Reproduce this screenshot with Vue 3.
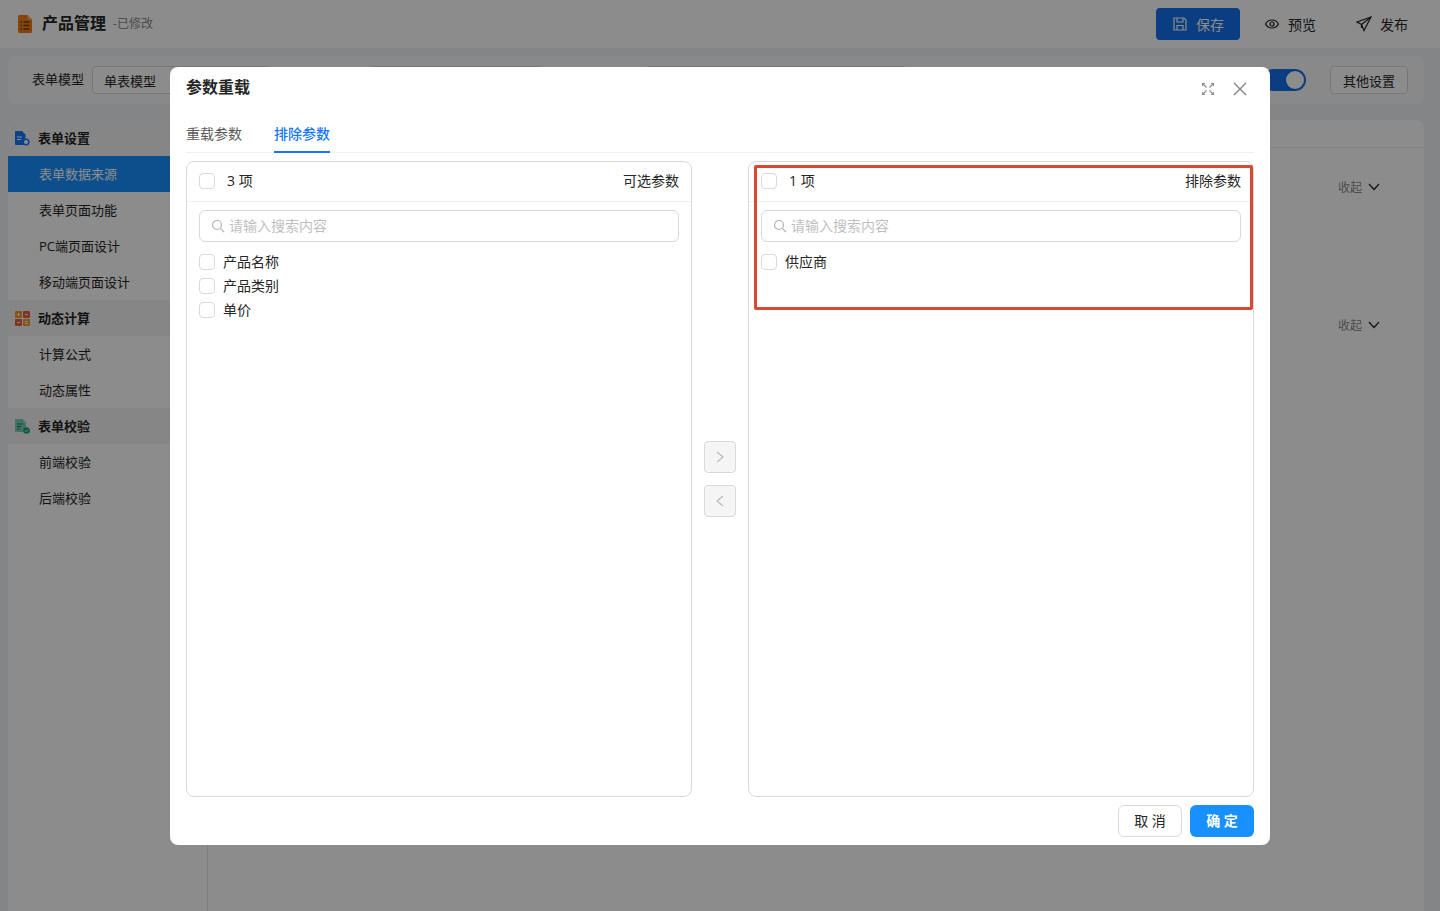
<template>
  <div class="page">
    <header class="topbar">
      <div class="brand">
        <svg class="brand-icon" width="16" height="18" viewBox="0 0 16 18">
          <path d="M1 1.5C1 .7 1.6 0 2.4 0H10.5L15 4.5V16.5c0 .8-.6 1.5-1.4 1.5H2.4C1.6 18 1 17.3 1 16.500Z" fill="#f07f13" />
          <path d="M10.500 0V4.500H15Z" fill="#f9b572" />
          <path d="M3.500 7h1.500M6.500 7h6M3.500 10.500h1.500M6.500 10.500h6M3.500 14h1.500M6.500 14h6" stroke="#7a3f05" stroke-width="1.300" />
        </svg>
        <span class="brand-name">产品管理</span>
        <span class="brand-state">-已修改</span>
      </div>
      <div class="actions">
        <button class="save-btn">
          <svg width="16" height="16" viewBox="0 0 16 16" fill="none" stroke="#fff" stroke-width="1.200">
            <path d="M2 2h10l2 2v10H2Z" />
            <path d="M5 2v4h6V2M5 14V9.500h6V14" />
          </svg>
          <span>保存</span>
        </button>
        <button class="plain-btn">
          <svg width="16" height="16" viewBox="0 0 16 16" fill="none" stroke="#222" stroke-width="1.200">
            <path d="M1.500 8C3 5.300 5.300 4 8 4s5 1.300 6.500 4C13 10.700 10.700 12 8 12S3 10.700 1.500 8Z" />
            <circle cx="8" cy="8" r="2" />
          </svg>
          <span>预览</span>
        </button>
        <button class="plain-btn">
          <svg width="16" height="16" viewBox="0 0 16 16" fill="none" stroke="#222" stroke-width="1.200">
            <path d="M15 1 1 6l4.500 2.500L8 14.500Z" />
            <path d="M15 1 5.500 8.500V12" />
          </svg>
          <span>发布</span>
        </button>
      </div>
    </header>

    <section class="toolbar">
      <label class="tool-label">表单模型</label>
      <div class="select select-model">单表模型</div>
      <label class="tool-label tool-gap">绑定模型</label>
      <div class="select select-bind"></div>
      <label class="tool-label tool-gap">数据接口</label>
      <div class="select select-api"></div>
      <div class="switch"><i></i></div>
      <button class="other-btn">其他设置</button>
    </section>

    <main class="workspace">
      <aside class="sidebar">
        <template v-for="group in menu" :key="group.title">
          <div class="group-title">
            <svg v-if="group.icon === 'form'" width="15" height="15" viewBox="0 0 15 15">
              <path d="M0 1C0 .4.400 0 1 0h6l3.500 3.500V14H1c-.6 0-1-.4-1-1Z" fill="#1677ff" />
              <path d="M2 6h5M2 8.500h4" stroke="#fff" stroke-width="1" />
              <circle cx="11" cy="11" r="2.800" fill="#fff" stroke="#1677ff" stroke-width="1.600" />
            </svg>
            <svg v-else-if="group.icon === 'calc'" width="15" height="15" viewBox="0 0 15 15">
              <rect x="0" y="0" width="7" height="7" rx="1" fill="#f59a23" />
              <rect x="8" y="0" width="7" height="7" rx="1" fill="#e8613c" />
              <rect x="0" y="8" width="7" height="7" rx="1" fill="#e8613c" />
              <rect x="8" y="8" width="7" height="7" rx="1" fill="#f59a23" />
              <path d="M2 3.500h3M3.500 2v3M10 3.500h3M2 11.500h3M10 10.500h3M10 12.500h3" stroke="#fff" stroke-width=".9" />
            </svg>
            <svg v-else width="15" height="15" viewBox="0 0 15 15">
              <path d="M0 0h7.500L11 3.500V13H0Z" fill="#7fd0b8" />
              <path d="M2 5h6M2 7.500h4M2 10h3" stroke="#0f7a5c" stroke-width="1" />
              <circle cx="11.500" cy="11.500" r="3.300" fill="#12a47a" />
              <path d="M10 11.500l1.100 1.100L13 10.700" fill="none" stroke="#fff" stroke-width="1" />
            </svg>
            <span>{{ group.title }}</span>
          </div>
          <div
            v-for="item in group.items"
            :key="item"
            class="menu-item"
            :class="{ active: item === '表单数据来源' }"
          >
            {{ item }}
          </div>
        </template>
      </aside>
      <div class="content">
        <div class="content-tabs"></div>
        <div class="fold-row first"><span>收起</span><svg width="12" height="8" viewBox="0 0 12 8" fill="none" stroke="#222" stroke-width="1.200"><path d="M1 1l5 5.500L11 1" /></svg></div>
        <div class="fold-row"><span>收起</span><svg width="12" height="8" viewBox="0 0 12 8" fill="none" stroke="#222" stroke-width="1.200"><path d="M1 1l5 5.500L11 1" /></svg></div>
      </div>
    </main>

    <div class="mask">
      <div class="modal">
        <div class="modal-head">
          <h3>参数重载</h3>
          <div class="modal-tools">
            <svg width="14" height="14" viewBox="0 0 14 14" fill="none" stroke="#8c8c8c" stroke-width="1.100">
              <path d="M2.500 2.500l3 3M11.500 2.500l-3 3M2.500 11.500l3-3M11.500 11.500l-3-3" />
              <path d="M1 1h3.500L1 4.500ZM13 1H9.500L13 4.500ZM1 13h3.500L1 9.500ZM13 13H9.500L13 9.500Z" fill="#8c8c8c" stroke="none" />
            </svg>
            <svg width="14" height="14" viewBox="0 0 14 14" fill="none" stroke="#808080" stroke-width="1.300">
              <path d="M1 1l12 12M13 1 1 13" />
            </svg>
          </div>
        </div>

        <div class="tabs">
          <div class="tab">重载参数</div>
          <div class="tab current">排除参数</div>
        </div>

        <div class="transfer">
          <div class="panel">
            <div class="panel-head">
              <span class="check"></span>
              <span class="count">3 项</span>
              <span class="panel-title">可选参数</span>
            </div>
            <div class="panel-body">
              <div class="search">
                <svg width="14" height="14" viewBox="0 0 14 14" fill="none" stroke="#b3b3b3" stroke-width="1.200">
                  <circle cx="6" cy="6" r="4.500" />
                  <path d="M9.300 9.300 13 13" />
                </svg>
                <span>请输入搜索内容</span>
              </div>
              <div v-for="name in available" :key="name" class="row">
                <span class="check"></span>
                <span class="row-text">{{ name }}</span>
              </div>
            </div>
          </div>

          <div class="shift">
            <button>
              <svg width="8" height="12" viewBox="0 0 8 12" fill="none" stroke="#b8b8b8" stroke-width="1.100"><path d="M1 1l6 5-6 5" /></svg>
            </button>
            <button>
              <svg width="8" height="12" viewBox="0 0 8 12" fill="none" stroke="#b8b8b8" stroke-width="1.100"><path d="M7 1 1 6l6 5" /></svg>
            </button>
          </div>

          <div class="panel">
            <div class="panel-head">
              <span class="check"></span>
              <span class="count">1 项</span>
              <span class="panel-title">排除参数</span>
            </div>
            <div class="panel-body">
              <div class="search">
                <svg width="14" height="14" viewBox="0 0 14 14" fill="none" stroke="#b3b3b3" stroke-width="1.200">
                  <circle cx="6" cy="6" r="4.500" />
                  <path d="M9.300 9.300 13 13" />
                </svg>
                <span>请输入搜索内容</span>
              </div>
              <div v-for="name in excluded" :key="name" class="row">
                <span class="check"></span>
                <span class="row-text">{{ name }}</span>
              </div>
            </div>
            <div class="callout"></div>
          </div>
        </div>

        <div class="modal-foot">
          <button class="cancel">取 消</button>
          <button class="confirm">确 定</button>
        </div>
      </div>
    </div>
  </div>
</template>

<script setup>
const menu = [
  { title: '表单设置', icon: 'form', items: ['表单数据来源', '表单页面功能', 'PC端页面设计', '移动端页面设计'] },
  { title: '动态计算', icon: 'calc', items: ['计算公式', '动态属性'] },
  { title: '表单校验', icon: 'check', items: ['前端校验', '后端校验'] }
]

const available = ['产品名称', '产品类别', '单价']
const excluded = ['供应商']
</script>

<style>
html,
body {
  margin: 0;
  overflow: hidden;
}
</style>

<style scoped>
.page {
  position: relative;
  height: 911px;
  display: flex;
  flex-direction: column;
  background: #eff1f4;
  color: #262626;
  font-family: "Open Sans", "Noto Sans CJK SC", sans-serif;
  font-size: 14px;
  overflow: hidden;
}

button {
  font-family: inherit;
  cursor: pointer;
}

.topbar {
  height: 48px;
  flex: none;
  display: flex;
  align-items: center;
  justify-content: space-between;
  padding: 0 20px 0 17px;
  background: #fff;
}

.brand {
  display: flex;
  align-items: center;
}

.brand-name {
  margin-left: 9px;
  margin-top: -4px;
  font-size: 16px;
  font-weight: 600;
}

.brand-state {
  margin-left: 7px;
  margin-top: -2px;
  font-size: 12px;
  color: #8c8c8c;
}

.actions {
  display: flex;
  align-items: center;
}

.save-btn,
.plain-btn {
  height: 32px;
  display: flex;
  align-items: center;
  gap: 8px;
  border: 0;
  font-size: 14px;
}

.save-btn {
  width: 84px;
  justify-content: center;
  margin-right: 12px;
  border-radius: 4px;
  background: #1570ef;
  color: #fff;
}

.plain-btn {
  width: 76px;
  padding: 0;
  justify-content: center;
  margin-right: 16px;
  background: none;
  color: #262626;
}

.plain-btn:last-child {
  margin-right: 0;
}

.toolbar {
  height: 48px;
  flex: none;
  margin: 8px 16px 16px 8px;
  padding: 0 16px 0 24px;
  display: flex;
  align-items: center;
  border-radius: 8px;
  background: #fafafa;
  font-size: 13px;
}

.tool-label {
  margin-top: -4px;
}

.tool-gap {
  margin-left: 16px;
}

.select {
  height: 28px;
  box-sizing: border-box;
  margin-left: 8px;
  padding: 1px 0 0 11px;
  line-height: 26px;
  border: 1px solid #d9d9d9;
  border-radius: 4px;
  background: #fff;
}

.select-model {
  width: 178px;
}

.select-bind {
  width: 174px;
  margin-left: 31px;
}

.select-api {
  width: 262px;
  margin-left: 34px;
}

.switch {
  width: 44px;
  height: 22px;
  margin-left: auto;
  box-sizing: border-box;
  padding: 2px;
  display: flex;
  justify-content: flex-end;
  border-radius: 11px;
  background: #1570ef;
}

.switch i {
  width: 18px;
  height: 18px;
  border-radius: 50%;
  background: #fff;
}

.other-btn {
  width: 78px;
  height: 28px;
  margin-left: 24px;
  padding: 0;
  border: 1px solid #d9d9d9;
  border-radius: 4px;
  background: #fff;
  color: #262626;
  font-size: 13px;
}

.workspace {
  flex: 1;
  display: flex;
  margin: 0 16px 0 8px;
  border-radius: 8px 8px 0 0;
  background: #fff;
  overflow: hidden;
}

.sidebar {
  width: 200px;
  flex: none;
  box-sizing: border-box;
  border-right: 1px solid #e4e4e4;
  font-size: 13px;
}

.group-title {
  height: 36px;
  display: flex;
  align-items: center;
  gap: 8px;
  padding-left: 7px;
  background: #f5f5f5;
  font-weight: 600;
}

.group-title span {
  margin-top: -2px;
}

.menu-item {
  height: 36px;
  padding-left: 31px;
  line-height: 36px;
}

.menu-item.active {
  background: #1890ff;
  color: #fff;
}

.content {
  flex: 1;
}

.content-tabs {
  height: 27px;
  border-bottom: 1px solid #ededed;
}

.fold-row {
  height: 20px;
  display: flex;
  align-items: center;
  justify-content: flex-end;
  gap: 6px;
  margin-top: 118px;
  padding-right: 44px;
  font-size: 12px;
  color: #8c8c8c;
}

.fold-row.first {
  margin-top: 29px;
}

.mask {
  position: absolute;
  inset: 0;
  background: rgba(0, 0, 0, 0.45);
}

.modal {
  width: 1100px;
  height: 778px;
  box-sizing: border-box;
  margin: 67px auto 0;
  padding: 0 16px 8px;
  display: flex;
  flex-direction: column;
  border-radius: 8px;
  background: #fff;
}

.modal-head {
  height: 40px;
  flex: none;
  display: flex;
  align-items: center;
  justify-content: space-between;
}

.modal-head h3 {
  margin: -2px 0 0;
  font-size: 16px;
  font-weight: 600;
}

.modal-tools {
  display: flex;
  align-items: center;
  gap: 18px;
  margin-right: 7px;
  margin-top: 4px;
}

.tabs {
  height: 46px;
  flex: none;
  box-sizing: border-box;
  display: flex;
  gap: 32px;
  border-bottom: 1px solid #f0f0f0;
}

.tab {
  height: 46px;
  box-sizing: border-box;
  padding-top: 17px;
  line-height: 20px;
  color: #595959;
}

.tab.current {
  border-bottom: 2px solid #1677ff;
  color: #1677ff;
  font-weight: 500;
}

.transfer {
  flex: 1;
  min-height: 0;
  display: flex;
  margin-top: 8px;
}

.panel {
  position: relative;
  flex: 1;
  box-sizing: border-box;
  border: 1px solid #d9d9d9;
  border-radius: 8px;
}

.panel-head {
  height: 40px;
  box-sizing: border-box;
  display: flex;
  align-items: center;
  padding: 0 12px 1px;
  border-bottom: 1px solid #f0f0f0;
}

.count {
  margin: -2px 0 0 12px;
}

.panel-title {
  margin: -2px 0 0 auto;
}

.panel-body {
  padding: 8px 12px;
}

.search {
  height: 32px;
  box-sizing: border-box;
  display: flex;
  align-items: center;
  gap: 4px;
  margin-bottom: 8px;
  padding: 0 11px;
  border: 1px solid #d9d9d9;
  border-radius: 6px;
  color: #bfbfbf;
}

.search span {
  margin-top: -2px;
}

.row {
  height: 24px;
  display: flex;
  align-items: center;
  gap: 8px;
}

.row-text {
  margin-top: -2px;
}

.check {
  width: 16px;
  height: 16px;
  flex: none;
  box-sizing: border-box;
  border: 1px solid #d9d9d9;
  border-radius: 4px;
  background: #fff;
}

.shift {
  width: 56px;
  flex: none;
  display: flex;
  flex-direction: column;
  align-items: center;
  justify-content: center;
  gap: 12px;
}

.shift button {
  width: 32px;
  height: 32px;
  padding: 0;
  display: flex;
  align-items: center;
  justify-content: center;
  border: 1px solid #d9d9d9;
  border-radius: 4px;
  background: #f5f5f5;
}

.callout {
  position: absolute;
  left: 5px;
  top: 3px;
  width: 499px;
  height: 145px;
  box-sizing: border-box;
  border: 3px solid #d9482f;
  border-radius: 2px;
}

.modal-foot {
  height: 40px;
  flex: none;
  display: flex;
  align-items: flex-end;
  justify-content: flex-end;
  gap: 8px;
}

.modal-foot button {
  height: 32px;
  padding: 0 0 2px;
  border-radius: 6px;
  font-size: 14px;
}

.cancel {
  width: 64px;
  border: 1px solid #d9d9d9;
  background: #fff;
  color: #262626;
}

.confirm {
  width: 64px;
  border: 0;
  background: #1890ff;
  color: #fff;
  font-weight: 600;
}
</style>
